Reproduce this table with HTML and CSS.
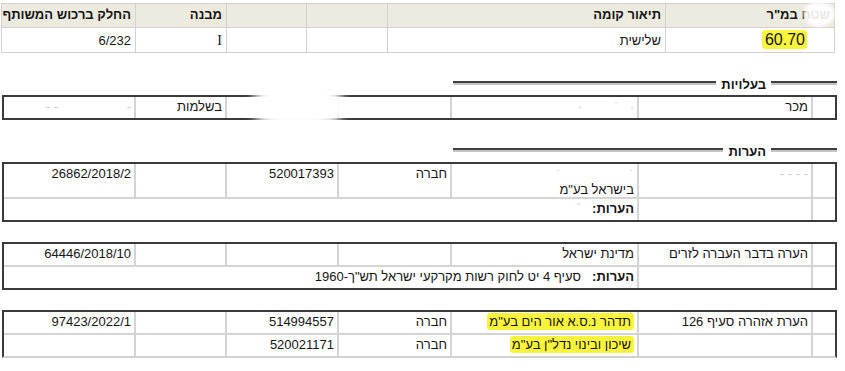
FILE: index.html
```html
<!DOCTYPE html>
<html lang="he" dir="rtl">
<head>
<meta charset="utf-8">
<title>נסח רישום</title>
<link rel="stylesheet" href="styles.css">
</head>
<body>
<div class="page">
  <table class="summary">
    <thead>
      <tr>
        <th class="s1">שטח במ"ר</th>
        <th class="s2">תיאור קומה</th>
        <th class="s3"></th>
        <th class="s4"></th>
        <th class="s5">מבנה</th>
        <th class="s6">החלק ברכוש המשותף</th>
      </tr>
    </thead>
    <tbody>
      <tr>
        <td class="area"><span class="mark big">60.70</span></td>
        <td>שלישית</td>
        <td></td>
        <td></td>
        <td class="roman">I</td>
        <td>6/232</td>
      </tr>
    </tbody>
  </table>
  <span class="watermark" aria-hidden="true"></span>

  <div class="section-title">
    <span class="rule short"></span>
    <span class="label">בעלויות</span>
    <span class="rule long"></span>
  </div>
  <table class="grid">
    <tr>
      <td class="c1"></td>
      <td class="c2">מכר</td>
      <td class="c3"><span class="smudge">&#183;&nbsp;&nbsp;&nbsp;&#729;&nbsp;&nbsp;&nbsp;&nbsp;&nbsp;&nbsp;&nbsp;&nbsp;&nbsp;&#183;</span></td>
      <td class="c4"></td>
      <td class="c5"></td>
      <td class="c6">בשלמות</td>
      <td class="c7"><span class="smudge">&#8208;&nbsp;&nbsp;&nbsp;&nbsp;&nbsp;&nbsp;&nbsp;&nbsp;&nbsp;&nbsp;&nbsp;&nbsp;&nbsp;&nbsp;&nbsp;&nbsp;&nbsp;&nbsp;&nbsp;&#8208;&nbsp;&#8208;</span></td>
    </tr>
  </table>
  <div class="redact r1"></div>

  <div class="section-title">
    <span class="rule short"></span>
    <span class="label">הערות</span>
    <span class="rule long"></span>
  </div>
  <table class="grid">
    <tr>
      <td class="c1"></td>
      <td class="c2"><span class="smudge">- - - -</span></td>
      <td class="c3 two-line"><span class="smudge">&#729;&nbsp;&nbsp;&nbsp;&nbsp;&nbsp;&nbsp;&nbsp;&nbsp;&nbsp;&nbsp;&nbsp;&nbsp;&nbsp;&nbsp;&nbsp;&nbsp;&nbsp;&nbsp;&nbsp;&#729;</span><br>בישראל בע"מ</td>
      <td class="c4">חברה</td>
      <td class="c5">520017393</td>
      <td class="c6"></td>
      <td class="c7">26862/2018/2</td>
    </tr>
    <tr>
      <td class="c1"></td>
      <td class="c2"></td>
      <td class="notes" colspan="5"><b class="notes-label">הערות:</b><span class="smudge">&#180;</span></td>
    </tr>
  </table>

  <table class="grid spaced">
    <tr>
      <td class="c1"></td>
      <td class="c2">הערה בדבר העברה לזרים</td>
      <td class="c3">מדינת ישראל</td>
      <td class="c4"></td>
      <td class="c5"></td>
      <td class="c6"></td>
      <td class="c7">64446/2018/10</td>
    </tr>
    <tr>
      <td class="c1"></td>
      <td class="c2"></td>
      <td class="notes" colspan="5"><b class="notes-label">הערות:</b>סעיף 4 יט לחוק רשות מקרקעי ישראל תש"ך-1960</td>
    </tr>
  </table>

  <table class="grid spaced open-bottom">
    <tr>
      <td class="c1"></td>
      <td class="c2">הערת אזהרה סעיף 126</td>
      <td class="c3"><span class="mark">תדהר נ.ס.א אור הים בע"מ</span></td>
      <td class="c4">חברה</td>
      <td class="c5">514994557</td>
      <td class="c6"></td>
      <td class="c7">97423/2022/1</td>
    </tr>
    <tr>
      <td class="c1"></td>
      <td class="c2"></td>
      <td class="c3"><span class="mark">שיכון ובינוי נדל"ן בע"מ</span></td>
      <td class="c4">חברה</td>
      <td class="c5">520021171</td>
      <td class="c6"></td>
      <td class="c7"></td>
    </tr>
  </table>
</div>
</body>
</html>
```

FILE: styles.css
```css
* {
  box-sizing: border-box;
}

html,
body {
  margin: 0;
  padding: 0;
  background: #ffffff;
}

body {
  font-family: "Liberation Sans", Arial, sans-serif;
  font-size: 13px;
  color: #141414;
}

.page {
  position: relative;
  width: 835px;
  margin-right: 8px;
  padding-top: 3px;
}

table {
  border-spacing: 0;
  table-layout: fixed;
}

th,
td {
  text-align: right;
  white-space: nowrap;
  overflow: hidden;
}

/* ---------- top summary table ---------- */
.summary {
  width: 833px;
  margin-right: 2px;
  border-collapse: collapse;
}

.summary th,
.summary td {
  border: 1px solid #d2d2d2;
  padding: 0 4px;
  line-height: 17px;
  vertical-align: middle;
}

.summary th {
  height: 24px;
  padding-bottom: 3px;
  background: #edeadf;
  font-weight: bold;
}

.summary td {
  height: 25px;
}

.s1 { width: 169px; }
.s2 { width: 278px; }
.s3 { width: 81px; }
.s4 { width: 80px; }
.s5 { width: 91px; }
.s6 { width: 134px; }

.summary td.area {
  padding-right: 27px;
}

.roman {
  font-family: "Liberation Serif", "Times New Roman", serif;
  font-size: 14px;
}

.mark {
  background: #fbf43c;
  padding: 1px 3px 1px 2px;
  border-radius: 3px;
}

.mark.big {
  font-size: 16px;
  padding: 1px 2px 1px 3px;
}

.watermark {
  position: absolute;
  top: 3px;
  right: 4px;
  width: 28px;
  height: 22px;
  border-radius: 50%;
  background: rgba(255, 255, 255, 0.9);
  box-shadow: 0 0 3px 2px rgba(255, 255, 255, 0.8);
}

/* ---------- section titles ---------- */
.section-title {
  display: flex;
  align-items: flex-start;
  width: 384px;
  height: 16px;
  margin-top: 24px;
  margin-bottom: 2px;
}

.section-title .label {
  font-weight: bold;
  line-height: 16px;
  padding: 0 5px;
}

.rule {
  height: 4px;
  margin-top: 4px;
  border-top: 2px solid #3f3f3f;
  border-bottom: 2px solid #c4c4c4;
}

.rule.short {
  width: 66px;
}

.rule.long {
  flex: 1;
}

/* ---------- grid tables ---------- */
.grid {
  width: 835px;
  border: 2px solid #3a3a3a;
}

.grid.spaced {
  margin-top: 20px;
}

.grid.open-bottom {
  border-bottom-color: #d2d2d2;
}

.grid td {
  padding: 1px 3px 3px 3px;
  line-height: 17px;
  vertical-align: top;
  border-left: 2px solid #d4d4d4;
}

.grid tr + tr td {
  border-top: 2px solid #d4d4d4;
}

.grid td:last-child {
  border-left: none;
}

.grid td.two-line {
  line-height: 15px;
  padding-top: 3px;
  padding-bottom: 0;
}

.c1 { width: 24px; }
.c2 { width: 174px; }
.c3 { width: 187px; }
.c4 { width: 113px; }
.c5 { width: 112px; }
.c6 { width: 91px; }

.notes-label {
  margin-left: 11px;
}

.smudge {
  color: #c9c9c9;
}

.redact {
  position: absolute;
  background: #ffffff;
  border-radius: 40%;
  filter: blur(4px);
}

.redact.r1 {
  left: 250px;
  top: 84px;
  width: 92px;
  height: 44px;
}
```
